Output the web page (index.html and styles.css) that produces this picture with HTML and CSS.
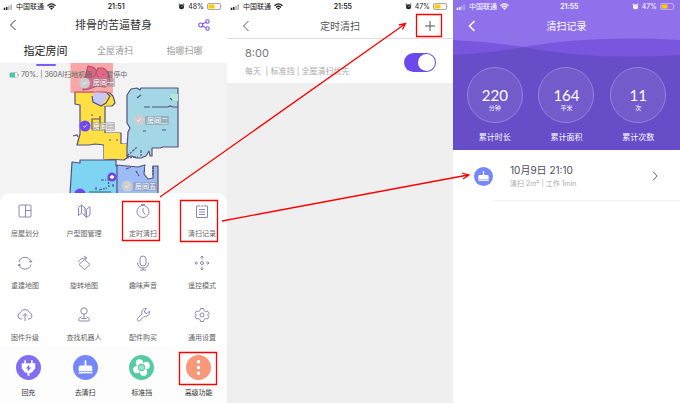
FILE: index.html
```html
<!DOCTYPE html>
<html lang="zh-CN">
<head>
<meta charset="utf-8">
<title>扫地机器人</title>
<link rel="stylesheet" href="styles.css">
</head>
<body>
<svg class="defs" aria-hidden="true">
  <symbol id="signal" viewBox="0 0 10 7"><path fill="currentColor" d="M0 4.500h1.800v2.500H0zM2.600 3.500h1.800V7H2.600z"/><path fill="currentColor" opacity=".35" d="M5.200 2h1.800v5H5.200zM7.800 .500h1.800V7H7.800z"/></symbol>
  <symbol id="wifi" viewBox="0 0 9 7"><path fill="none" stroke="currentColor" stroke-width="1.300" d="M.500 2.700q4-3.600 8 0M2 4.400q2.500-2.200 5 0"/><path fill="currentColor" d="M3 5.300q1.500-1.200 3 0L4.500 6.900z"/></symbol>
  <symbol id="alarm" viewBox="0 0 7 7"><circle cx="3.500" cy="3.700" r="2.500" fill="currentColor"/><path stroke="currentColor" d="M.700 1.700 2 .700M6.300 1.700 5 .700"/><path class="alarm-hand" fill="none" d="M3.200 4.200 4.700 2.700"/></symbol>
  <symbol id="battery" viewBox="0 0 16 7"><rect x=".500" y=".500" width="13" height="6" rx="1.500" fill="none" stroke="currentColor" opacity=".4"/><path fill="#fc0" d="M1.500 1.500h6v4h-6z"/><path fill="currentColor" opacity=".5" d="M14.500 2.500q1 1 0 2z"/></symbol>
  <symbol id="back" viewBox="0 0 8 12"><path fill="none" stroke="currentColor" d="M6.500 1 1.500 6l5 5"/></symbol>
  <symbol id="broom" viewBox="0 0 24 24"><path fill="#fff" d="M11.200 5.500q.800-1.200 1.600 0V10h4q1.700 0 1.700 1.800v3.700h-13v-3.700Q5.500 10 7.200 10h4zM5.500 16.200h13v1.600h-2v-.600h-1v.600h-2v-.600h-1v.600h-2v-.600h-1v.600h-4z"/></symbol>
</svg>

<main class="board">
  <section class="phone control">
    <div class="status">
      <svg class="i-signal"><use href="#signal"/></svg><span>中国联通</span><svg class="i-wifi"><use href="#wifi"/></svg>
      <b class="time">21:51</b>
      <svg class="i-alarm"><use href="#alarm"/></svg><span>48%</span><svg class="i-battery"><use href="#battery"/></svg>
    </div>
    <header class="bar bar-device">
      <button class="icon-btn back" aria-label="返回"><svg class="i-back"><use href="#back"/></svg></button>
      <h1>排骨的苦逼替身</h1>
      <button class="icon-btn share" aria-label="分享"><svg viewBox="0 0 12 12" width="12" height="12"><g fill="none" stroke="currentColor" stroke-width="1.100"><circle cx="2.700" cy="6" r="2"/><circle cx="9.500" cy="2.500" r="1.700"/><circle cx="9.500" cy="9.500" r="1.700"/><path d="m4.500 5 3.300-1.700M4.500 7l3.300 1.700"/></g></svg></button>
    </header>
    <nav class="tabs">
      <a href="#" class="active">指定房间</a><a href="#">全屋清扫</a><a href="#">指哪扫哪</a>
    </nav>
    <div class="map">
      <svg class="floor" viewBox="0 63 227 130" role="img" aria-label="地图">
        <g stroke="#57507f" stroke-width="1.200" stroke-linejoin="round">
          <path fill="#d36fb4" d="m88 66 5 1 4 4 1-3 5 0 3 2 3 5 1 7-5 5-8-1-8 3-6 1 2-12z"/>
          <path fill="#fee045" d="M75 92h30l5 1 3 3 2 7-3 3h-7v27h16v11h7v13l-4 3-20-1v-14l-9-1-6 1H77l3-11v-29l-5-1z"/>
          <path fill="#fee045" stroke="none" d="M104 133h16v11h7v14l-23 1zM104 98l9 7-9 1z"/>
          <path fill="#a3d7e5" d="m131 89 6-1 3 2 1-2h37v59h-15l-3 1h-8v8h-2l-1-5-3 5-5 2h-5l-4-2-5 1v-9l1-16 2-4-3-5V95z"/>
          <path fill="#7dd5f3" d="m70 194 2-32 8 1v-3h36v6l4 2-3 26z"/>
          <path fill="#9dbcf5" d="m117 165 21 2 7-2-1 9 4 5 5-1v-12l5 0v28h-41z"/>
        </g>
        <path fill="#c7c8fa" d="m94 91 15 3-8 12-9-4z"/>
        <path fill="#b0eadb" d="M170 94h8v7h-5l-3-3z"/>
        <path fill="#f3f3f3" d="m145 166 7 1v9l-4 1-3-5z"/>
        <g fill="none" stroke="#57507f" stroke-width="1.200">
          <path d="m92 96 1 6 8 4 5-3 4-7-3-3M92 119h8v10h-8zM137 98l4-3M144 107h6m2 0h16l2-1 3 1h5M143 131h3M162 130h4M91 115h2M100 116v3M109 140h2M116 140h2M73 136l4-1 1 2"/>
          <path d="m127 156 8-7 2-2M126 158l12-1M141 150v6M170 98l3 3M96 187v4M101 180h5M108 178l1 9M113 176h3M113 184v4M99 190l8-2M126 169l5-2M136 171l3 5M153 166v9" stroke-dasharray="3 1 2 1"/>
        </g>
        <path fill="#fe5a5a" fill-opacity=".5" d="M70.500 63h42.500v30H70.500z"/>
        <g class="pins">
          <g fill="#8d8d9a" fill-opacity=".5"><rect x="91" y="78" width="24" height="9" rx="1"/><rect x="91" y="122" width="24" height="9" rx="1"/><rect x="145" y="116" width="24" height="9" rx="1"/><rect x="133" y="182" width="26" height="9" rx="1"/></g>
          <g fill="#cdcdd0"><circle cx="84.500" cy="83" r="5.500"/><circle cx="139" cy="120" r="5.500"/><circle cx="127" cy="186" r="5.500"/></g>
          <g fill="#7045f5"><circle cx="85" cy="126" r="5.500"/><circle cx="112" cy="177" r="4.500"/><circle cx="80" cy="194" r="5.500"/></g>
          <path fill="#fff" d="M110 176h1.200v-1h1.600v1h1.200v2h-1.200v1h-1.600v-1H110z"/>
          <path fill="none" stroke="#fff" stroke-width=".8" d="m82.500 83 1.500 1.500 2.500-3M83 126l1.500 1.500 2.500-3M137 120l1.500 1.500 2.500-3M125 186l1.500 1.500 2.500-3"/>
          <text x="93" y="85">房间一</text><text x="93" y="129">房间三</text><text x="147" y="123">房间二</text><text x="135" y="189">房间五</text>
          <rect x="89" y="191" width="22" height="4" fill="#4e9fb9"/>
        </g>
      </svg>
      <p class="robot"><svg viewBox="0 0 10 6" width="10" height="6"><rect x=".500" y=".500" width="8" height="5" rx="1" fill="#fff" stroke="#c5c5c5"/><path fill="#2ed3a5" d="M1 1h5v4H1z"/><path stroke="#c5c5c5" d="M9.500 2v2"/></svg>70%. | 360AI扫地机器人 - 暂停中</p>
    </div>
    <div class="sheet">
      <button class="tile"><svg viewBox="0 0 18 18"><rect x="3" y="3" width="12" height="12" rx="1"/><path d="M9.500 3v12M9.500 8.500H15"/></svg>房屋划分</button>
      <button class="tile"><svg viewBox="0 0 18 18"><path d="M3.500 13.500v-8l3-2.500 3.500 3v8l-3.500-3zM6.500 3v8M10 6l1.500 1.500L15 4.500v8.500l-3.500 2.500-1.500-1.500M11.500 7.500v8"/></svg>户型图管理</button>
      <button class="tile"><svg viewBox="0 0 18 18"><circle cx="9" cy="9.500" r="6"/><path d="M7 2.500h4M9 6v4l2.500 2.500"/></svg>定时清扫</button>
      <button class="tile"><svg viewBox="0 0 18 18"><path d="M5 4H3.500v11.500h11V4H13M7.500 4h3M6 2.500V5M12 2.500V5M6 7.500h6M6 10h6M6 12.500h6"/></svg>清扫记录</button>
      <button class="tile"><svg viewBox="0 0 18 18"><path d="M3 8A6.200 6.200 0 0 1 15 8M15 10.500A6.200 6.200 0 0 1 3 10.500M13 7l2 1.500 1-2M5 11.500 3 10l-1 2"/></svg>重建地图</button>
      <button class="tile"><svg viewBox="0 0 18 18"><path d="m9.500 5.500 5.500 5-5.500 5-5.500-5zM3.500 8Q5 4 11 4M9 2l3 2-2.500 2"/></svg>旋转地图</button>
      <button class="tile"><svg viewBox="0 0 18 18"><rect x="6" y="2" width="6" height="10" rx="3"/><path d="M3.500 8.500q0 5.500 5.500 5.500t5.500-5.500M9 14v2M6 16h6"/></svg>趣味声音</button>
      <button class="tile"><svg viewBox="0 0 18 18"><circle cx="9" cy="9" r="1.500"/><path d="M9 2v3.500M7.500 3.500 9 2l1.500 1.500M9 12.500V16M7.500 14.500 9 16l1.500-1.500M2 9h3M3.500 7.500 2 9l1.500 1.500M13 9h3M14.500 7.500 16 9l-1.500 1.500"/></svg>遥控模式</button>
      <button class="tile"><svg viewBox="0 0 18 18"><path d="M6 13H5a3.200 3.200 0 0 1-.500-6.300Q5.500 3.500 9 3.500t4.500 3.200A3.200 3.200 0 0 1 13 13h-1M9 15V8M6.500 10 9 7.700l2.500 2.300"/></svg>固件升级</button>
      <button class="tile"><svg viewBox="0 0 18 18"><circle cx="9" cy="5" r="3.200"/><path d="M9 8.200v4.300M6.500 10.500 3.800 13q-1 2 1 2h8.400q2 0 1-2l-2.700-2.500M6.500 12.500h5"/></svg>查找机器人</button>
      <button class="tile"><svg viewBox="0 0 18 18"><path d="M3.500 12.500 8 8q-1-4 2.500-5.500l2-.200-2 2.700.500 2 2 .500L15.500 5q.500 5.500-5.500 5.500L5.500 15q-1.500.500-2-.500t0-2z"/></svg>配件购买</button>
      <button class="tile"><svg viewBox="0 0 18 18"><circle cx="9" cy="9" r="2"/><path d="m7.500 2.500h3l.500 2 1.500 1 2-.500 1.500 2.500L14.500 9l1.500 1.500-1.500 2.500-2-.500-1.500 1-.500 2h-3l-.500-2-1.500-1-2 .500L2 10.500 3.500 9 2 7.500 3.500 5l2 .500 1.500-1z"/></svg>通用设置</button>
    </div>
    <div class="dock">
      <button><svg class="c1" viewBox="0 0 24 24"><path fill="#fff" d="M8 5h1.500v3h5V5H16v3h2.500v5l-3.500 4h-2v3h-2v-3H9l-3.500-4V8H8z"/><path fill="#7868ed" d="m12.800 9-3.300 4h2l-.500 3 3.500-4h-2z"/></svg>回充</button>
      <button><svg class="c2" viewBox="0 0 24 24"><use href="#broom"/></svg>去清扫</button>
      <button><svg class="c3" viewBox="0 0 24 24"><g fill="#fff"><circle cx="10" cy="7.500" r="3.500"/><circle cx="16.500" cy="10" r="3.500"/><circle cx="14" cy="16.500" r="3.500"/><circle cx="7.500" cy="14" r="3.500"/></g><circle cx="12" cy="12" r="3" fill="#9be2ca" stroke="#54cba5"/></svg>标准挡</button>
      <button><svg class="c4" viewBox="0 0 24 24"><path fill="#fff" d="M10.500 5h3v3h-3zM10.500 10.500h3v3h-3zM10.500 16h3v3h-3z"/></svg>高级功能</button>
    </div>
  </section>

  <section class="phone timer">
    <div class="status">
      <svg class="i-signal"><use href="#signal"/></svg><span>中国联通</span><svg class="i-wifi"><use href="#wifi"/></svg>
      <b class="time">21:55</b>
      <svg class="i-alarm"><use href="#alarm"/></svg><span>47%</span><svg class="i-battery"><use href="#battery"/></svg>
    </div>
    <header class="bar bar-page">
      <button class="icon-btn back" aria-label="返回"><svg class="i-back"><use href="#back"/></svg></button>
      <h2>定时清扫</h2>
      <button class="icon-btn" aria-label="添加"><svg viewBox="0 0 10 10" width="10" height="10"><path stroke="#555" d="M0 5h10M5 0v10"/></svg></button>
    </header>
    <div class="schedule">
      <label for="timer-on"><span class="hour">8:00</span><span class="detail">每天&nbsp; | 标准挡 | 全屋清扫优先</span></label>
      <input id="timer-on" class="switch" type="checkbox" role="switch" checked>
    </div>
  </section>

  <section class="phone history">
    <div class="summary">
      <svg class="waves" viewBox="0 0 227 150" preserveAspectRatio="none" aria-hidden="true"><path fill="#9071ec" d="M0 0h227v60H0z"/><path fill="#7956dd" d="M0 40Q40 42 70 47 140 35 227 40v25H0z"/><path fill="#674dc8" d="M0 55q40-2 70-8 70 14 157 8v95H0z"/></svg>
      <div class="status">
        <svg class="i-signal"><use href="#signal"/></svg><span>中国联通</span><svg class="i-wifi"><use href="#wifi"/></svg>
        <b class="time">21:55</b>
        <svg class="i-alarm"><use href="#alarm"/></svg><span>47%</span><svg class="i-battery"><use href="#battery"/></svg>
      </div>
      <header class="bar bar-page">
        <button class="icon-btn back" aria-label="返回"><svg class="i-back bold"><use href="#back"/></svg></button>
        <h2>清扫记录</h2>
      </header>
      <div class="totals">
        <div class="total"><div class="ring"><strong>220</strong><small>分钟</small></div>累计时长</div>
        <div class="total"><div class="ring"><strong>164</strong><small>平米</small></div>累计面积</div>
        <div class="total"><div class="ring"><strong>11</strong><small>次</small></div>累计次数</div>
      </div>
    </div>
    <a class="record" href="#">
      <svg class="c2" viewBox="0 0 24 24"><use href="#broom"/></svg>
      <span class="record-body"><span class="when">10月9日 21:10</span><span class="what">清扫 2m² | 工作 1min</span></span>
      <svg class="next" viewBox="0 0 6 10"><path fill="none" stroke="#666" d="m1 .500 4 4.500-4 4.500"/></svg>
    </a>
  </section>

  <svg class="notes" viewBox="0 0 680 403" aria-hidden="true">
    <g fill="none" stroke="#f00" stroke-width="1.300">
      <path d="M122.500 201.500h37v39h-37zM180.500 200.500h37v41h-37zM179.500 352.500h37v32h-37zM416.500 14.500h25v22h-25z"/>
      <path d="M160 197 405 24M399 25l6.500-1.500-3 6M222 221l246-46M462 173l7 2-6 4"/>
    </g>
  </svg>
</main>
</body>
</html>
```
FILE: styles.css
```css
* { box-sizing: border-box; }
body, h1, h2, p { margin: 0; }
body {
  font-family: Inter, "Noto Sans CJK SC", sans-serif;
  color: #333;
  background: #fff;
}
button {
  padding: 0;
  border: 0;
  background: none;
  font: inherit;
  color: inherit;
  cursor: pointer;
}
a { color: inherit; text-decoration: none; }
svg { display: block; flex: none; }
.defs { position: absolute; width: 0; height: 0; }

.board {
  position: relative;
  display: grid;
  grid-template-columns: 227fr 226fr 227fr;
  min-height: 100vh;
}
.notes {
  position: absolute;
  top: 0;
  left: 0;
  width: 100%;
  pointer-events: none;
}
.phone { display: flex; flex-direction: column; min-width: 0; }

/* Status bar */
.status {
  display: grid;
  grid-template-columns: 10px auto 1fr auto 1fr auto 16px;
  align-items: center;
  gap: 3px;
  height: 13px;
  padding: 0 4px 0 3px;
  font-size: 7px;
  line-height: 12px;
  color: #222;
}
.i-signal { width: 10px; height: 6px; }
.i-wifi { width: 9px; height: 7px; }
.i-alarm { width: 7px; height: 7px; justify-self: end; }
.i-battery { width: 16px; height: 7px; }
.i-back { width: 8px; height: 12px; }
.alarm-hand { stroke: #aaa; stroke-width: 1; }
.time { font-weight: 600; }

/* Title bars */
.bar {
  display: grid;
  grid-template-columns: 28px 1fr 28px;
  align-items: center;
  height: 24px;
  padding: 0 9px;
}
.bar h1, .bar h2 { text-align: center; font-weight: 400; line-height: 16px; }
.bar h1 { font-size: 11px; }
.bar h2 { font-size: 10px; }
.bar-page { height: 26px; }
.icon-btn { display: grid; place-items: center; }
.back { justify-self: start; }
.bar-page .back { padding-left: 6px; }
.share { color: #7956ee; }

/* Robot control */
.control { background: #f3f3f3; }
.control .status, .control .bar { background: #fff; }
.tabs {
  display: grid;
  grid-template-columns: 67px 1fr 67px;
  height: 26px;
  padding: 0 9px 0 12px;
  font-size: 9px;
  line-height: 28px;
  text-align: center;
  color: #999;
  background: #fff;
}
.tabs .active { position: relative; font-size: 11px; color: #222; }
.tabs .active::after {
  content: "";
  position: absolute;
  bottom: -1px;
  left: 50%;
  z-index: 1;
  width: 20px;
  height: 2px;
  margin-left: -10px;
  border-radius: 1px;
  background: #7b5cf5;
}
.map { display: grid; }
.map > * { grid-area: 1 / 1; }
.floor { width: 100%; }
.robot {
  align-self: start;
  display: flex;
  align-items: center;
  gap: 2px;
  padding: 7px 9px;
  font-size: 7px;
  line-height: 10px;
  color: #666;
}
.pins text { font-size: 7px; fill: #fff; }
.sheet {
  display: grid;
  grid-template-columns: repeat(4, 50px);
  justify-content: space-between;
  row-gap: 15px;
  padding: 9px 0 4px;
  border-radius: 10px 10px 0 0;
  background: #fff;
}
.tile, .dock button {
  display: flex;
  flex-direction: column;
  align-items: center;
  font-size: 7px;
  line-height: 10px;
  white-space: nowrap;
}
.tile { gap: 9px; color: #666; }
.tile svg { width: 18px; height: 18px; fill: none; stroke: #8c87b5; stroke-width: 1; }
.dock {
  flex: 1;
  display: grid;
  grid-template-columns: repeat(4, 1fr);
  align-items: start;
  padding: 8px 0 3px;
  background: #fdfdfd;
}
.dock button { gap: 8px; }
.dock svg { width: 25px; height: 25px; border-radius: 50%; }
.c1 { background: #806ff3; }
.c2 { background: #7588fb; }
.c3 { background: #54cba5; }
.c4 { background: #f8977a; }

/* Timer list */
.timer { background: #efefef; }
.timer .status, .timer .bar { background: #fff; }
.timer .bar { border-bottom: 1px solid #ddd; color: #555; }
.schedule {
  display: flex;
  align-items: center;
  justify-content: space-between;
  padding: 5px 17px 3px 18px;
  background: #fff;
}
.schedule label { display: grid; }
.hour { font-size: 11px; line-height: 18px; color: #777; }
.detail { font-size: 8px; line-height: 18px; color: #aaa; }
.switch {
  appearance: none;
  display: flex;
  justify-content: flex-end;
  width: 32px;
  height: 19px;
  margin: 0;
  padding: 1px;
  border-radius: 10px;
  background: #6b49ec;
}
.switch::before { content: ""; width: 17px; height: 17px; border-radius: 50%; background: #fff; }
.switch:not(:checked) { justify-content: flex-start; background: #ccc; }

/* Cleaning history */
.history { background: #fff; }
.summary { position: relative; display: grid; padding-bottom: 7px; color: #fff; }
.summary > * { position: relative; }
.summary > .waves { position: absolute; width: 100%; height: 100%; }
.summary .status { color: #fff; }
.bold { stroke-width: 1.5; }
.totals {
  display: grid;
  grid-template-columns: repeat(3, 1fr);
  padding: 28px 6px 0;
}
.total {
  display: flex;
  flex-direction: column;
  align-items: center;
  gap: 8px;
  font-size: 8px;
  line-height: 12px;
}
.ring {
  display: flex;
  flex-direction: column;
  align-items: center;
  width: 56px;
  height: 56px;
  padding-top: 18px;
  border: 1px solid #9583d9;
  border-radius: 50%;
  background: #735bcc;
}
.ring strong { font: 400 15px/18px Lato, sans-serif; }
.ring small { font-size: 6px; line-height: 8px; }
.record {
  position: relative;
  display: flex;
  align-items: center;
  gap: 17px;
  margin-left: 21px;
  padding: 12px 22px 11px 0;
}
.record::after {
  content: "";
  position: absolute;
  right: 0;
  bottom: 0;
  left: 19px;
  border-bottom: 1px solid #f3f3f3;
}
.record > .c2 { width: 19px; height: 19px; border-radius: 50%; }
.record-body { display: grid; flex: 1; }
.when { font-size: 10px; line-height: 16px; color: #4c4c60; }
.what { font-size: 7px; line-height: 12px; color: #aaa; }
.record > .next { width: 6px; height: 10px; }
```
